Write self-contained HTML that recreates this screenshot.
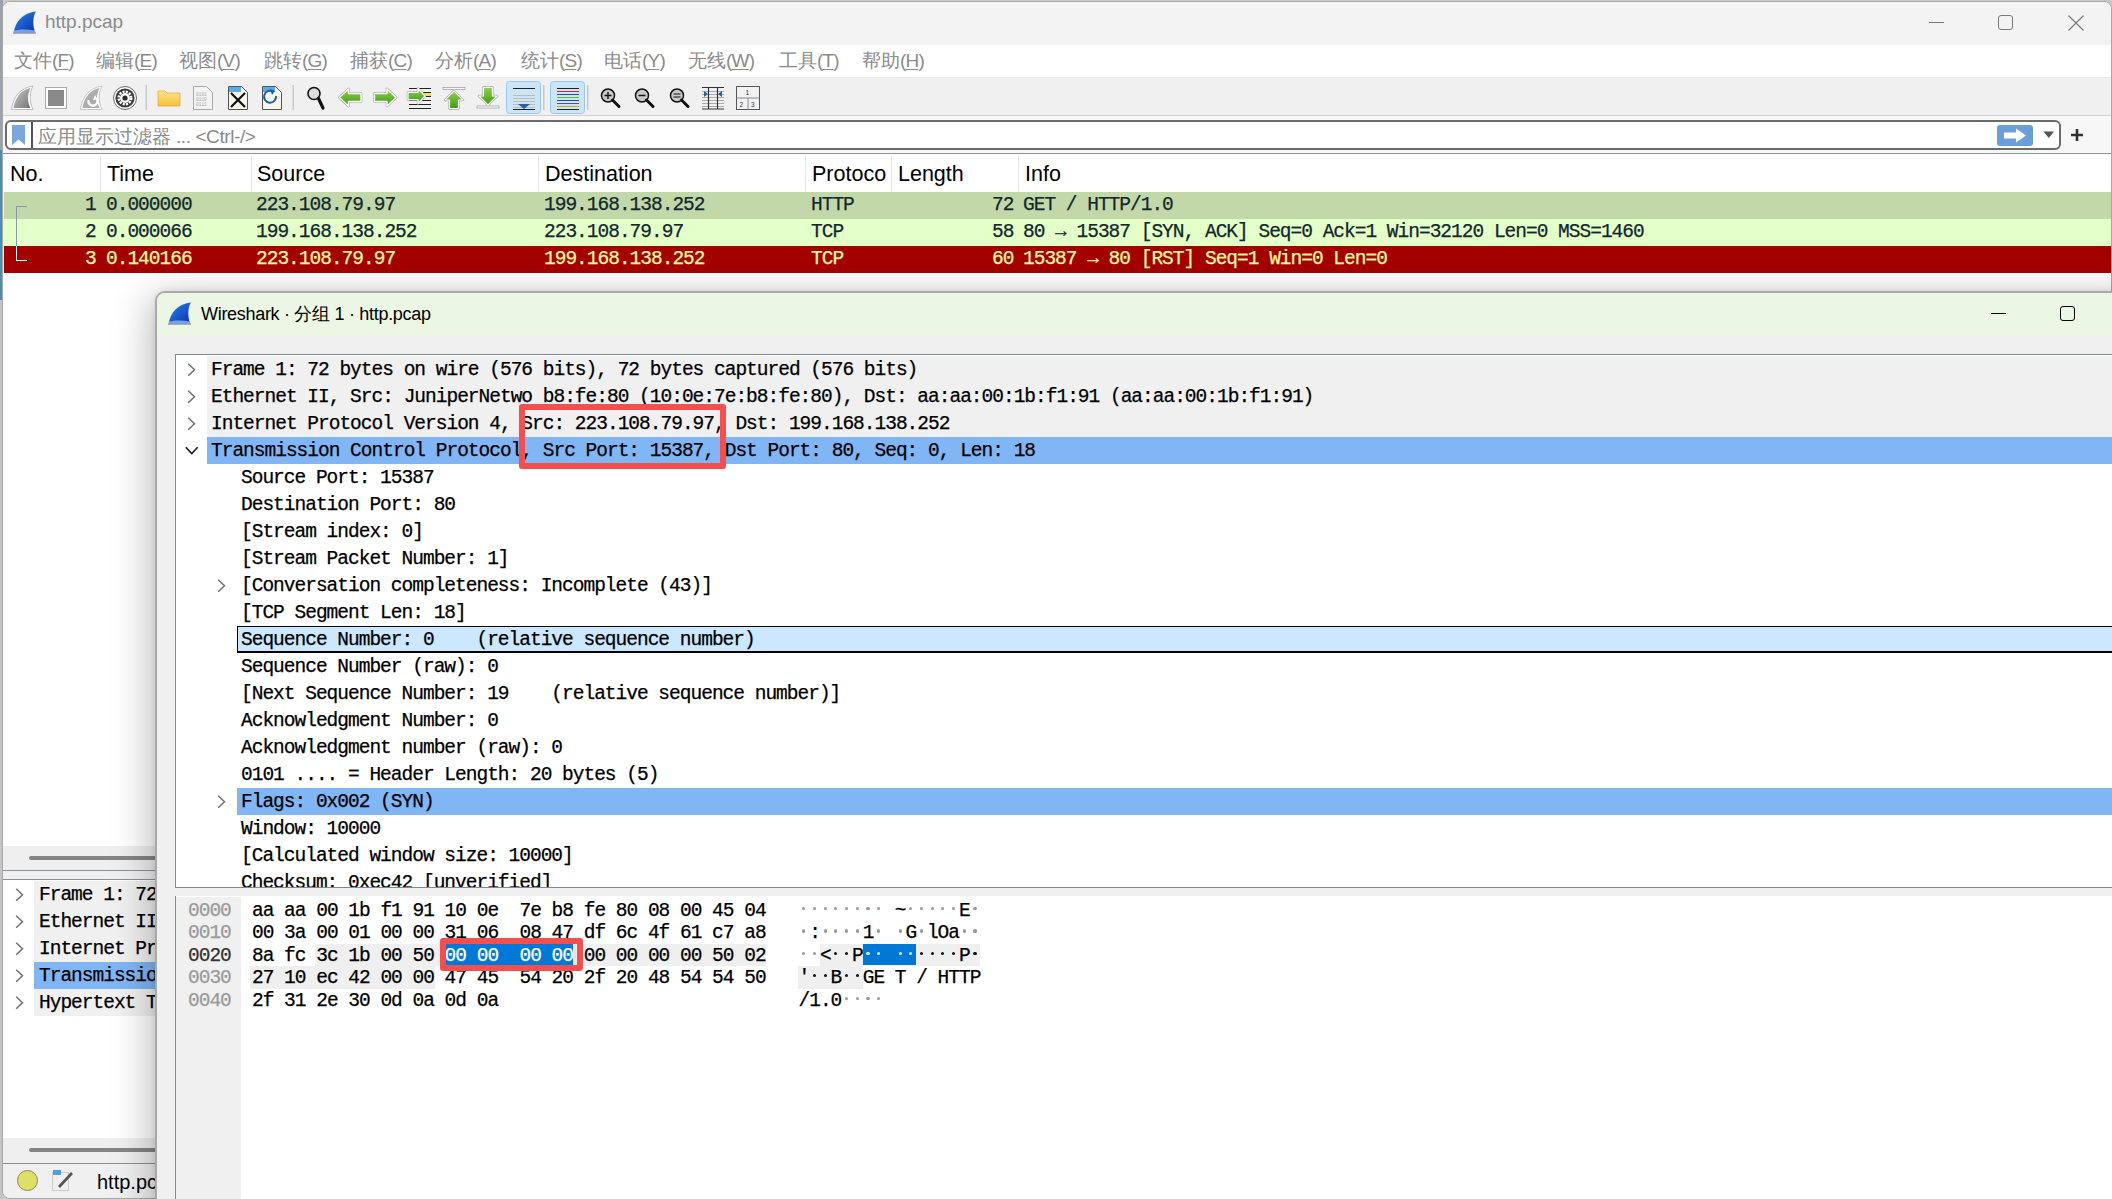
<!DOCTYPE html><html><head><meta charset="utf-8"><style>
*{margin:0;padding:0;box-sizing:border-box}
html,body{width:2112px;height:1199px;overflow:hidden;background:#c9c9c9;font-family:"Liberation Sans", sans-serif}
.a{position:absolute}
.m{font-family:"Liberation Mono", monospace;font-size:19.5px;letter-spacing:-1.0px;white-space:pre;line-height:27px;color:#000;-webkit-text-stroke:0.25px currentColor}
.s{font-family:"Liberation Sans", sans-serif;white-space:pre}
.mn{font-family:"Liberation Sans", sans-serif;font-size:19px;color:#8a8a8a;line-height:32px;white-space:pre}
.u{text-decoration:underline;text-underline-offset:2px}
.hd{font-family:"Liberation Sans", sans-serif;font-size:21.5px;line-height:38px;color:#000;white-space:pre}
</style></head><body>
<div class="a" style="left:0px;top:0px;width:3px;height:150px;background:#9aa3ab;"></div>
<div class="a" style="left:0px;top:150px;width:3px;height:150px;background:#4a8db5;"></div>
<div class="a" style="left:0px;top:300px;width:3px;height:899px;background:#c4c4c4;"></div>
<div class="a" style="left:2px;top:1px;width:2110px;height:1198px;border:1px solid #a8a8a8;border-radius:8px;background:#f0f0f0;overflow:hidden"><div class="a" style="left:-3px;top:-2px;width:2112px;height:1199px">
<div class="a" style="left:0px;top:0px;width:2112px;height:45px;background:#f3f3f3;"></div>
<svg class="a" style="left:13px;top:11px" width="24" height="23" viewBox="0 0 24 23">
<defs><linearGradient id="sg1" x1="0" y1="0" x2="1" y2="1"><stop offset="0" stop-color="#2a86f0"/><stop offset="1" stop-color="#0a2fa8"/></linearGradient></defs>
<path d="M0.5 22 C2 11 9 2 23.2 0.2 C20 5 19.5 14 22.5 22 Z" fill="url(#sg1)" stroke="#ffffff" stroke-opacity="0.5" stroke-width="0.6"/>
<path d="M1 19.5 C7 18 15 18 22 19.5 L22.5 22 L0.5 22 Z" fill="#8ab0f0" opacity="0.85"/>
<path d="M0 22.3 H23" stroke="#6a6a70" stroke-width="0.9" opacity="0.7"/>
</svg>
<div class="a s" style="left:45px;top:8px;font-size:19px;color:#8b8b8b;line-height:27px">http.pcap</div>
<div class="a" style="left:1929px;top:22px;width:15px;height:1px;background:#7a7a7a;"></div>
<div class="a" style="left:1998px;top:15px;width:15px;height:15px;background:transparent;border:1px solid #7a7a7a;border-radius:3px"></div>
<svg class="a" style="left:2068px;top:15px" width="16" height="16"><path d="M0.5 0.5L15.5 15.5M15.5 0.5L0.5 15.5" stroke="#7a7a7a" stroke-width="1.1"/></svg>
<div class="a" style="left:0px;top:45px;width:2112px;height:32px;background:#ffffff;"></div>
<div class="a mn" style="left:14px;top:45px">文件<span style="letter-spacing:-0.8px">(<span class="u">F</span>)</span></div>
<div class="a mn" style="left:96px;top:45px">编辑<span style="letter-spacing:-0.8px">(<span class="u">E</span>)</span></div>
<div class="a mn" style="left:179px;top:45px">视图<span style="letter-spacing:-0.8px">(<span class="u">V</span>)</span></div>
<div class="a mn" style="left:264px;top:45px">跳转<span style="letter-spacing:-0.8px">(<span class="u">G</span>)</span></div>
<div class="a mn" style="left:350px;top:45px">捕获<span style="letter-spacing:-0.8px">(<span class="u">C</span>)</span></div>
<div class="a mn" style="left:435px;top:45px">分析<span style="letter-spacing:-0.8px">(<span class="u">A</span>)</span></div>
<div class="a mn" style="left:521px;top:45px">统计<span style="letter-spacing:-0.8px">(<span class="u">S</span>)</span></div>
<div class="a mn" style="left:604px;top:45px">电话<span style="letter-spacing:-0.8px">(<span class="u">Y</span>)</span></div>
<div class="a mn" style="left:688px;top:45px">无线<span style="letter-spacing:-0.8px">(<span class="u">W</span>)</span></div>
<div class="a mn" style="left:779px;top:45px">工具<span style="letter-spacing:-0.8px">(<span class="u">T</span>)</span></div>
<div class="a mn" style="left:862px;top:45px">帮助<span style="letter-spacing:-0.8px">(<span class="u">H</span>)</span></div>
<div class="a" style="left:0px;top:77px;width:2112px;height:1px;background:#e9e9e9;"></div>
<div class="a" style="left:0px;top:78px;width:2112px;height:37px;background:#f0f0f0;"></div>
<div class="a" style="left:0px;top:115px;width:2112px;height:1px;background:#d0d0d0;"></div>
<svg class="a" style="left:0;top:78px" width="800" height="37" viewBox="0 78 800 37">
<defs>
<linearGradient id="gf" x1="0" y1="0" x2="1" y2="1"><stop offset="0" stop-color="#c8c8c8"/><stop offset="1" stop-color="#777"/></linearGradient>
<linearGradient id="gg" x1="0" y1="0" x2="0" y2="1"><stop offset="0" stop-color="#8fd14f"/><stop offset="1" stop-color="#3f9a10"/></linearGradient>
<linearGradient id="fo" x1="0" y1="0" x2="0" y2="1"><stop offset="0" stop-color="#ffe48a"/><stop offset="1" stop-color="#f5c040"/></linearGradient>
</defs>
<!-- shark fin gray -->
<path d="M11.5 109.5 C13 97 20 88 33 86 C29.5 92 29 101 33 109.5 Z" fill="#fff" stroke="#bdbdbd" stroke-width="1"/>
<path d="M13.5 108 C15 98 21 90 30.5 88 C27.5 94 27 101 30.5 108 Z" fill="url(#gf)"/>
<!-- stop square -->
<rect x="45.5" y="87.5" width="21" height="21" fill="#fff" stroke="#aaa"/>
<rect x="48" y="90" width="16" height="16" fill="#8a8a8a"/>
<!-- shark restart -->
<path d="M80.5 109.5 C82 97 89 88 102 86 C98.5 92 98 101 102 109.5 Z" fill="#fff" stroke="#c4c4c4" stroke-width="1"/>
<path d="M82.5 108 C84 98 90 90 99.5 88 C96.5 94 96 101 99.5 108 Z" fill="#acacac"/>
<path d="M88.5 100 a4.5 4.5 0 1 0 8 -1.5" fill="none" stroke="#fff" stroke-width="2.2"/>
<path d="M95 95 l3 4.5 -5 0.5z" fill="#fff"/>
<!-- gear -->
<circle cx="125" cy="98" r="11.5" fill="#fff" stroke="#666" stroke-width="1"/>
<circle cx="125" cy="98" r="9.6" fill="#3a3a3a"/>
<circle cx="125" cy="98" r="6.3" fill="none" stroke="#fff" stroke-width="2.4" stroke-dasharray="2.1 1.2"/>
<circle cx="125" cy="98" r="5" fill="#fff"/>
<circle cx="125" cy="98" r="2.6" fill="#2a2a2a"/>
<rect x="145.5" y="85" width="1.5" height="25" fill="#c8c8c8"/>
<!-- folder -->
<path d="M158 91 h7 l2 2 h13 v13 h-22z" fill="url(#fo)" stroke="#e5a823" stroke-width="0.7"/>
<!-- docs -->
<path d="M193.5 86.5 h13 l6 6 v17 h-19z" fill="#f3f3f3" stroke="#aaa"/>
<text x="196" y="96" font-size="4.5" fill="#aaa" font-family="Liberation Mono">0101</text><text x="196" y="101" font-size="4.5" fill="#aaa" font-family="Liberation Mono">0110</text><text x="196" y="106" font-size="4.5" fill="#aaa" font-family="Liberation Mono">0111</text>
<path d="M228.5 86.5 h13 l6 6 v17 h-19z" fill="#f8f6e8" stroke="#555"/>
<path d="M229 87 h12 v5 h-12z" fill="#5aaae8"/>
<path d="M231 93 L245 107 M245 93 L231 107" stroke="#111" stroke-width="2.2"/>
<path d="M262.5 86.5 h13 l6 6 v17 h-19z" fill="#f8f6e8" stroke="#555"/>
<path d="M263 87 h12 v5 h-12z" fill="#5aaae8"/>
<path d="M276 96 a6 6 0 1 1 -3 -4.5" fill="none" stroke="#1d5bb8" stroke-width="2"/>
<path d="M270 89 l5 2 -3 4z" fill="#1d5bb8"/>
<rect x="292.5" y="85" width="1.5" height="25" fill="#c8c8c8"/>
<!-- magnifier -->
<circle cx="314" cy="93.5" r="6" fill="#ddd" stroke="#111" stroke-width="1.6"/>
<path d="M318.5 98.5 L323 108" stroke="#111" stroke-width="3.2" stroke-linecap="round"/>
<!-- left arrow -->
<path d="M339.5 97.5 L348.5 89 V93.5 H361 V101.5 H348.5 V106Z" fill="#fff" stroke="#a8a8a8" stroke-width="2.6" stroke-linejoin="round"/>
<path d="M339.5 97.5 L348.5 89 V93.5 H361 V101.5 H348.5 V106Z" fill="url(#gg)" stroke="#fff" stroke-width="1.4" stroke-linejoin="round"/>
<!-- right arrow -->
<path d="M396 97.5 L387 89 V93.5 H374.5 V101.5 H387 V106Z" fill="#fff" stroke="#a8a8a8" stroke-width="2.6" stroke-linejoin="round"/>
<path d="M396 97.5 L387 89 V93.5 H374.5 V101.5 H387 V106Z" fill="url(#gg)" stroke="#fff" stroke-width="1.4" stroke-linejoin="round"/>
<!-- goto -->
<g stroke="#222" stroke-width="1.2"><path d="M409 88.5H431M409 92.5H431M409 96.5H431M409 100.5H431M409 104.5H431M409 108.5H431"/></g>
<rect x="424" y="93" width="7" height="3" fill="#f7e04a"/>
<path d="M425 96 L418 88.5 V92.5 H408 V99.5 H418 V103.5Z" fill="#fff" stroke="#a8a8a8" stroke-width="2.4" stroke-linejoin="round"/>
<path d="M425 96 L418 88.5 V92.5 H408 V99.5 H418 V103.5Z" fill="url(#gg)" stroke="#fff" stroke-width="1.2" stroke-linejoin="round"/>
<!-- up -->
<rect x="443" y="87.5" width="22" height="2" fill="#fff" stroke="#888" stroke-width="0.6"/>
<path d="M454 91 L463 100 H458.5 V108.5 H449.5 V100 H445Z" fill="#fff" stroke="#a8a8a8" stroke-width="2.4" stroke-linejoin="round"/>
<path d="M454 91 L463 100 H458.5 V108.5 H449.5 V100 H445Z" fill="url(#gg)" stroke="#fff" stroke-width="1.2" stroke-linejoin="round"/>
<!-- down -->
<rect x="477" y="106" width="22" height="2" fill="#fff" stroke="#888" stroke-width="0.6"/>
<path d="M488 105 L497 96 H492.5 V87.5 H483.5 V96 H479Z" fill="#fff" stroke="#a8a8a8" stroke-width="2.4" stroke-linejoin="round"/>
<path d="M488 105 L497 96 H492.5 V87.5 H483.5 V96 H479Z" fill="url(#gg)" stroke="#fff" stroke-width="1.2" stroke-linejoin="round"/>
<!-- autoscroll -->
<rect x="506.5" y="81.5" width="34" height="32" rx="3" fill="#cce4f7" stroke="#99c8ef"/>
<g stroke="#bdbdb0" stroke-width="1.2"><path d="M513 95.5H535M513 98.5H535M513 101.5H535M513 104.5H535M513 107.5H535"/></g>
<path d="M513 88.5H535M513 109.5H535" stroke="#222" stroke-width="1.2"/>
<path d="M518 104 h12 l-6 5z" fill="#2a5fa8"/>
<rect x="543" y="85" width="1.5" height="25" fill="#c8c8c8"/>
<!-- colorize -->
<rect x="550.5" y="81.5" width="34" height="32" rx="3" fill="#cce4f7" stroke="#99c8ef"/>
<path d="M557 88.5H579" stroke="#222" stroke-width="1.2"/><path d="M557 91.5H579" stroke="#e02020" stroke-width="1.2"/><path d="M557 94.5H579" stroke="#2050c0" stroke-width="1.2"/><path d="M557 97.5H579" stroke="#60c020" stroke-width="1.2"/><path d="M557 100.5H579" stroke="#2050a0" stroke-width="1.2"/><path d="M557 103.5H579" stroke="#704090" stroke-width="1.2"/><path d="M557 106.5H579" stroke="#d0a020" stroke-width="1.2"/><path d="M557 109.5H579" stroke="#222" stroke-width="1.2"/>
<rect x="587" y="85" width="1.5" height="25" fill="#c8c8c8"/>
<!-- zoom in/out/normal -->
<g>
<circle cx="608" cy="95.5" r="6.5" fill="#c8c8c8" stroke="#111" stroke-width="1.5"/><path d="M612.5 100 L619 106.5" stroke="#111" stroke-width="3" stroke-linecap="round"/><path d="M604.5 95.5h7M608 92v7" stroke="#111" stroke-width="1.4"/>
<circle cx="642" cy="95.5" r="6.5" fill="#c8c8c8" stroke="#111" stroke-width="1.5"/><path d="M646.5 100 L653 106.5" stroke="#111" stroke-width="3" stroke-linecap="round"/><path d="M638.5 95.5h7" stroke="#111" stroke-width="1.4"/>
<circle cx="677" cy="95.5" r="6.5" fill="#c8c8c8" stroke="#111" stroke-width="1.5"/><path d="M681.5 100 L688 106.5" stroke="#111" stroke-width="3" stroke-linecap="round"/><path d="M673.5 94h7M673.5 97h7" stroke="#111" stroke-width="1.2"/>
</g>
<!-- resize columns -->
<g stroke="#999" stroke-width="0.8"><path d="M702 91.5H724M702 94.5H724M702 97.5H724M702 100.5H724M702 103.5H724M702 106.5H724"/></g>
<path d="M702 87.5H724M702 109H724M708.5 87V109M717.5 87V109" stroke="#333" stroke-width="1.2"/>
<path d="M704 91 l4 3 -4 3z M722 91 l-4 3 4 3z" fill="#2a5fa8"/>
<!-- layout -->
<rect x="736.5" y="86.5" width="23" height="23" fill="#f2f2f2" stroke="#555"/>
<path d="M736.5 98H759.5M748 98V109.5" stroke="#888"/>
<text x="745.5" y="95" font-size="6.5" font-family="Liberation Sans" fill="#333">1</text>
<text x="739.5" y="106.5" font-size="6.5" font-family="Liberation Sans" fill="#333">2</text>
<text x="751" y="106.5" font-size="6.5" font-family="Liberation Sans" fill="#333">3</text>
</svg>
<div class="a" style="left:0px;top:116px;width:2112px;height:37px;background:#f7f7f7;"></div>
<div class="a" style="left:5px;top:120px;width:2056px;height:30px;background:#ffffff;border:2px solid #6b6b6b;border-radius:6px"></div>
<div class="a" style="left:31px;top:122px;width:2px;height:26px;background:#555;"></div>
<div class="a" style="left:12px;top:125px;width:13px;height:20px;background:#7aa7de;clip-path:polygon(0 0,100% 0,100% 100%,50% 72%,0 100%)"></div>
<div class="a s" style="left:38px;top:122px;font-size:19px;line-height:30px;color:#8a8a8a">应用显示过滤器<span style="letter-spacing:-0.4px"> ... &lt;Ctrl-/&gt;</span></div>
<div class="a" style="left:1997px;top:125px;width:36px;height:21px;background:#6b9fd8;border-radius:3px"></div>
<svg class="a" style="left:1997px;top:125px" width="36" height="21"><path d="M7 7.5H19V3.5L29 10.5L19 17.5V13.5H7Z" fill="#fff"/></svg>
<svg class="a" style="left:2043px;top:131px" width="12" height="8"><path d="M0.5 0.5H11L5.75 7Z" fill="#555"/></svg>
<svg class="a" style="left:2070px;top:128px" width="14" height="14"><path d="M7 1V13M1 7H13" stroke="#333" stroke-width="2.6"/></svg>
<div class="a" style="left:2px;top:153px;width:2112px;height:1px;background:#8c9097;"></div>
<div class="a" style="left:3px;top:154px;width:2112px;height:38px;background:#ffffff;"></div>
<div class="a" style="left:100px;top:156px;width:1px;height:36px;background:#e5e5e5;"></div>
<div class="a" style="left:251px;top:156px;width:1px;height:36px;background:#e5e5e5;"></div>
<div class="a" style="left:538px;top:156px;width:1px;height:36px;background:#e5e5e5;"></div>
<div class="a" style="left:805px;top:156px;width:1px;height:36px;background:#e5e5e5;"></div>
<div class="a" style="left:891px;top:156px;width:1px;height:36px;background:#e5e5e5;"></div>
<div class="a" style="left:1018px;top:156px;width:1px;height:36px;background:#e5e5e5;"></div>
<div class="a hd" style="left:10px;top:155px;">No.</div>
<div class="a hd" style="left:107px;top:155px;">Time</div>
<div class="a hd" style="left:257px;top:155px;">Source</div>
<div class="a hd" style="left:545px;top:155px;">Destination</div>
<div class="a hd" style="left:812px;top:155px;">Protoco</div>
<div class="a hd" style="left:898px;top:155px;">Length</div>
<div class="a hd" style="left:1025px;top:155px;">Info</div>
<div class="a" style="left:4px;top:192px;width:2112px;height:27px;background:#c2d8a8;"></div>
<div class="a m" style="left:85px;top:192.4px;color:#12272e">1</div>
<div class="a m" style="left:106px;top:192.4px;color:#12272e">0.000000</div>
<div class="a m" style="left:256px;top:192.4px;color:#12272e">223.108.79.97</div>
<div class="a m" style="left:544px;top:192.4px;color:#12272e">199.168.138.252</div>
<div class="a m" style="left:811px;top:192.4px;color:#12272e">HTTP</div>
<div class="a m" style="left:992px;top:192.4px;color:#12272e">72</div>
<div class="a m" style="left:1023px;top:192.4px;color:#12272e">GET / HTTP/1.0</div>
<div class="a" style="left:4px;top:219px;width:2112px;height:27px;background:#e4ffc7;"></div>
<div class="a m" style="left:85px;top:219.4px;color:#12272e">2</div>
<div class="a m" style="left:106px;top:219.4px;color:#12272e">0.000066</div>
<div class="a m" style="left:256px;top:219.4px;color:#12272e">199.168.138.252</div>
<div class="a m" style="left:544px;top:219.4px;color:#12272e">223.108.79.97</div>
<div class="a m" style="left:811px;top:219.4px;color:#12272e">TCP</div>
<div class="a m" style="left:992px;top:219.4px;color:#12272e">58</div>
<div class="a m" style="left:1023px;top:219.4px;color:#12272e">80 → 15387 [SYN, ACK] Seq=0 Ack=1 Win=32120 Len=0 MSS=1460</div>
<div class="a" style="left:4px;top:246px;width:2112px;height:27px;background:#a40000;"></div>
<div class="a m" style="left:85px;top:246.4px;color:#fffc9c">3</div>
<div class="a m" style="left:106px;top:246.4px;color:#fffc9c">0.140166</div>
<div class="a m" style="left:256px;top:246.4px;color:#fffc9c">223.108.79.97</div>
<div class="a m" style="left:544px;top:246.4px;color:#fffc9c">199.168.138.252</div>
<div class="a m" style="left:811px;top:246.4px;color:#fffc9c">TCP</div>
<div class="a m" style="left:992px;top:246.4px;color:#fffc9c">60</div>
<div class="a m" style="left:1023px;top:246.4px;color:#fffc9c">15387 → 80 [RST] Seq=1 Win=0 Len=0</div>
<div class="a" style="left:16px;top:206px;width:1.2px;height:40px;background:#8a99a6;"></div>
<div class="a" style="left:16px;top:206px;width:11px;height:1.2px;background:#8a99a6;"></div>
<div class="a" style="left:16px;top:259.5px;width:11px;height:1.4px;background:#ffffff;"></div>
<div class="a" style="left:16px;top:246px;width:1.4px;height:14px;background:#ffffff;"></div>
<div class="a" style="left:3px;top:273px;width:2112px;height:573px;background:#ffffff;"></div>
<div class="a" style="left:3px;top:846px;width:2112px;height:24px;background:#efefef;"></div>
<div class="a" style="left:29px;top:856px;width:2100px;height:4px;background:#858585;border-radius:2px"></div>
<div class="a" style="left:2px;top:870px;width:2112px;height:1px;background:#8c9097;"></div>
<div class="a" style="left:3px;top:871px;width:2112px;height:8px;background:#f0f0f0;"></div>
<div class="a" style="left:2px;top:879px;width:2112px;height:1px;background:#8c9097;"></div>
<div class="a" style="left:3px;top:880px;width:2112px;height:258px;background:#ffffff;"></div>
<div class="a" style="left:34px;top:881px;width:2112px;height:27px;background:#f0f0f0;"></div>
<div class="a m" style="left:39px;top:882px;">Frame 1: 72 bytes on wire (576 bits), 72 bytes captured (576 bits)</div>
<svg class="a" style="left:15px;top:888px" width="10" height="14"><path d="M1.2 0.8L7.5 6.8L1.2 12.8" fill="none" stroke="#707070" stroke-width="1.5"/></svg>
<div class="a" style="left:34px;top:908px;width:2112px;height:27px;background:#f0f0f0;"></div>
<div class="a m" style="left:39px;top:909px;">Ethernet II, Src: JuniperNetwo b8:fe:80</div>
<svg class="a" style="left:15px;top:915px" width="10" height="14"><path d="M1.2 0.8L7.5 6.8L1.2 12.8" fill="none" stroke="#707070" stroke-width="1.5"/></svg>
<div class="a" style="left:34px;top:935px;width:2112px;height:27px;background:#f0f0f0;"></div>
<div class="a m" style="left:39px;top:936px;">Internet Protocol Version 4, Src: 223.108.79.97</div>
<svg class="a" style="left:15px;top:942px" width="10" height="14"><path d="M1.2 0.8L7.5 6.8L1.2 12.8" fill="none" stroke="#707070" stroke-width="1.5"/></svg>
<div class="a" style="left:34px;top:962px;width:2112px;height:27px;background:#80b6f5;"></div>
<div class="a m" style="left:39px;top:963px;">Transmission Control Protocol, Src Port</div>
<svg class="a" style="left:15px;top:969px" width="10" height="14"><path d="M1.2 0.8L7.5 6.8L1.2 12.8" fill="none" stroke="#707070" stroke-width="1.5"/></svg>
<div class="a" style="left:34px;top:989px;width:2112px;height:27px;background:#f0f0f0;"></div>
<div class="a m" style="left:39px;top:990px;">Hypertext Transfer Protocol</div>
<svg class="a" style="left:15px;top:996px" width="10" height="14"><path d="M1.2 0.8L7.5 6.8L1.2 12.8" fill="none" stroke="#707070" stroke-width="1.5"/></svg>
<div class="a" style="left:3px;top:1138px;width:2112px;height:25px;background:#efefef;"></div>
<div class="a" style="left:29px;top:1148px;width:2100px;height:4px;background:#858585;border-radius:2px"></div>
<div class="a" style="left:2px;top:1163px;width:2112px;height:1px;background:#8c9097;"></div>
<div class="a" style="left:3px;top:1164px;width:2112px;height:35px;background:#f0f0f0;"></div>
<svg class="a" style="left:16px;top:1169px" width="23" height="23"><circle cx="11.5" cy="11.5" r="10" fill="#dede6a" stroke="#8c8c40" stroke-width="1"/></svg>
<svg class="a" style="left:52px;top:1169px" width="22" height="22"><rect x="0.5" y="3.5" width="16" height="18" fill="#f0f0f0" stroke="#ccc"/><rect x="1" y="1" width="8" height="5" fill="#4aa0e0"/><path d="M6 17 L19 3 L21 5 L8 19Z" fill="#555"/></svg>
<div class="a s" style="left:97px;top:1165.5px;font-size:20px;line-height:33px;color:#000">http.pcap</div>
</div></div>
<div class="a" style="left:155px;top:291px;width:2000px;height:1000px;border:2px solid #a9a9a9;border-radius:10px;background:#f0f0f0;box-shadow:-4px 6px 38px rgba(0,0,0,0.28), 0 0 6px rgba(0,0,0,0.08);overflow:hidden"><div class="a" style="left:-157px;top:-293px;width:2112px;height:1199px">
<div class="a" style="left:0px;top:293px;width:2112px;height:43px;background:#ebf6e4;"></div>
<svg class="a" style="left:168px;top:302px" width="24" height="23" viewBox="0 0 24 23">
<defs><linearGradient id="sg2" x1="0" y1="0" x2="1" y2="1"><stop offset="0" stop-color="#2a86f0"/><stop offset="1" stop-color="#0a2fa8"/></linearGradient></defs>
<path d="M0.5 22 C2 11 9 2 23.2 0.2 C20 5 19.5 14 22.5 22 Z" fill="url(#sg2)" stroke="#ffffff" stroke-opacity="0.5" stroke-width="0.6"/>
<path d="M1 19.5 C7 18 15 18 22 19.5 L22.5 22 L0.5 22 Z" fill="#8ab0f0" opacity="0.85"/>
<path d="M0 22.3 H23" stroke="#6a6a70" stroke-width="0.9" opacity="0.7"/>
</svg>
<div class="a s" style="left:201px;top:301px;font-size:18px;letter-spacing:-0.3px;line-height:27px;color:#000">Wireshark · 分组 1 · http.pcap</div>
<div class="a" style="left:1991px;top:313px;width:15px;height:1.2px;background:#000;"></div>
<div class="a" style="left:2060px;top:306px;width:15px;height:15px;background:transparent;border:1.5px solid #000;border-radius:3px"></div>
<div class="a" style="left:175px;top:354px;width:2000px;height:534px;background:#ffffff;border:1px solid #828790"></div>
<div class="a" style="left:176px;top:355px;width:1936px;height:532px;overflow:hidden"><div class="a" style="left:-176px;top:-355px;width:2112px;height:1199px">
<div class="a" style="left:207px;top:356px;width:2112px;height:27px;background:#f0f0f0;"></div>
<div class="a m" style="left:211px;top:357px;">Frame 1: 72 bytes on wire (576 bits), 72 bytes captured (576 bits)</div>
<svg class="a" style="left:187px;top:363px" width="10" height="14"><path d="M1.2 0.8L7.5 6.8L1.2 12.8" fill="none" stroke="#707070" stroke-width="1.5"/></svg>
<div class="a" style="left:207px;top:383px;width:2112px;height:27px;background:#f0f0f0;"></div>
<div class="a m" style="left:211px;top:384px;">Ethernet II, Src: JuniperNetwo b8:fe:80 (10:0e:7e:b8:fe:80), Dst: aa:aa:00:1b:f1:91 (aa:aa:00:1b:f1:91)</div>
<svg class="a" style="left:187px;top:390px" width="10" height="14"><path d="M1.2 0.8L7.5 6.8L1.2 12.8" fill="none" stroke="#707070" stroke-width="1.5"/></svg>
<div class="a" style="left:207px;top:410px;width:2112px;height:27px;background:#f0f0f0;"></div>
<div class="a m" style="left:211px;top:411px;">Internet Protocol Version 4, Src: 223.108.79.97, Dst: 199.168.138.252</div>
<svg class="a" style="left:187px;top:417px" width="10" height="14"><path d="M1.2 0.8L7.5 6.8L1.2 12.8" fill="none" stroke="#707070" stroke-width="1.5"/></svg>
<div class="a" style="left:207px;top:437px;width:2112px;height:27px;background:#80b6f5;"></div>
<div class="a m" style="left:211px;top:438px;">Transmission Control Protocol, Src Port: 15387, Dst Port: 80, Seq: 0, Len: 18</div>
<svg class="a" style="left:185px;top:446px" width="14" height="9"><path d="M0.8 1.2L6.75 7.5L12.7 1.2" fill="none" stroke="#1a1a1a" stroke-width="1.6"/></svg>
<div class="a m" style="left:241px;top:465px;">Source Port: 15387</div>
<div class="a m" style="left:241px;top:492px;">Destination Port: 80</div>
<div class="a m" style="left:241px;top:519px;">[Stream index: 0]</div>
<div class="a m" style="left:241px;top:546px;">[Stream Packet Number: 1]</div>
<div class="a m" style="left:241px;top:573px;">[Conversation completeness: Incomplete (43)]</div>
<svg class="a" style="left:217px;top:579px" width="10" height="14"><path d="M1.2 0.8L7.5 6.8L1.2 12.8" fill="none" stroke="#707070" stroke-width="1.5"/></svg>
<div class="a m" style="left:241px;top:600px;">[TCP Segment Len: 18]</div>
<div class="a" style="left:237px;top:626px;width:2112px;height:27px;background:#cce8ff;border:1px solid #000;border-bottom-width:2px"></div>
<div class="a m" style="left:241px;top:627px;">Sequence Number: 0    (relative sequence number)</div>
<div class="a m" style="left:241px;top:654px;">Sequence Number (raw): 0</div>
<div class="a m" style="left:241px;top:681px;">[Next Sequence Number: 19    (relative sequence number)]</div>
<div class="a m" style="left:241px;top:708px;">Acknowledgment Number: 0</div>
<div class="a m" style="left:241px;top:735px;">Acknowledgment number (raw): 0</div>
<div class="a m" style="left:241px;top:762px;">0101 .... = Header Length: 20 bytes (5)</div>
<div class="a" style="left:237px;top:788px;width:2112px;height:27px;background:#80b6f5;"></div>
<div class="a m" style="left:241px;top:789px;">Flags: 0x002 (SYN)</div>
<svg class="a" style="left:217px;top:795px" width="10" height="14"><path d="M1.2 0.8L7.5 6.8L1.2 12.8" fill="none" stroke="#707070" stroke-width="1.5"/></svg>
<div class="a m" style="left:241px;top:816px;">Window: 10000</div>
<div class="a m" style="left:241px;top:843px;">[Calculated window size: 10000]</div>
<div class="a m" style="left:241px;top:870px;">Checksum: 0xec42 [unverified]</div>
</div></div>
<div class="a" style="left:175px;top:896px;width:2000px;height:400px;background:#ffffff;border-left:1px solid #828790"></div>
<div class="a" style="left:176px;top:897px;width:65px;height:400px;background:#f0f0f0;"></div>
<div class="a m" style="left:188px;top:900.0px;line-height:22.4px;color:#9a9a9a">0000</div>
<div class="a m" style="left:188px;top:922.4px;line-height:22.4px;color:#9a9a9a">0010</div>
<div class="a m" style="left:188px;top:944.8px;line-height:22.4px;color:#333">0020</div>
<div class="a m" style="left:188px;top:967.2px;line-height:22.4px;color:#9a9a9a">0030</div>
<div class="a m" style="left:188px;top:989.6px;line-height:22.4px;color:#9a9a9a">0040</div>
<div class="a" style="left:315.2px;top:943.8px;width:450.8px;height:22.4px;background:#efefef;"></div>
<div class="a" style="left:250px;top:966.2px;width:184.89999999999998px;height:22.4px;background:#efefef;"></div>
<div class="a" style="left:444.6px;top:943.5px;width:128.39999999999998px;height:21.5px;background:#0078d7;"></div>
<div class="a" style="left:573px;top:943.5px;width:3px;height:21.5px;background:#e6e6e6;"></div>
<div class="a" style="left:819.9px;top:943.8px;width:160.5000000000001px;height:22.4px;background:#efefef;"></div>
<div class="a" style="left:798px;top:966.2px;width:64.70000000000005px;height:22.4px;background:#efefef;"></div>
<div class="a" style="left:862.7px;top:943.5px;width:53.5px;height:21.5px;background:#0078d7;"></div>
<div class="a m" style="left:252.0px;top:900.0px;line-height:22.4px;color:#000">aa</div>
<div class="a m" style="left:284.1px;top:900.0px;line-height:22.4px;color:#000">aa</div>
<div class="a m" style="left:316.2px;top:900.0px;line-height:22.4px;color:#000">00</div>
<div class="a m" style="left:348.3px;top:900.0px;line-height:22.4px;color:#000">1b</div>
<div class="a m" style="left:380.4px;top:900.0px;line-height:22.4px;color:#000">f1</div>
<div class="a m" style="left:412.5px;top:900.0px;line-height:22.4px;color:#000">91</div>
<div class="a m" style="left:444.6px;top:900.0px;line-height:22.4px;color:#000">10</div>
<div class="a m" style="left:476.7px;top:900.0px;line-height:22.4px;color:#000">0e</div>
<div class="a m" style="left:519.5px;top:900.0px;line-height:22.4px;color:#000">7e</div>
<div class="a m" style="left:551.6px;top:900.0px;line-height:22.4px;color:#000">b8</div>
<div class="a m" style="left:583.7px;top:900.0px;line-height:22.4px;color:#000">fe</div>
<div class="a m" style="left:615.8px;top:900.0px;line-height:22.4px;color:#000">80</div>
<div class="a m" style="left:647.9px;top:900.0px;line-height:22.4px;color:#000">08</div>
<div class="a m" style="left:680.0px;top:900.0px;line-height:22.4px;color:#000">00</div>
<div class="a m" style="left:712.1px;top:900.0px;line-height:22.4px;color:#000">45</div>
<div class="a m" style="left:744.2px;top:900.0px;line-height:22.4px;color:#000">04</div>
<div class="a" style="left:802.20px;top:907.00px;width:3.2px;height:3.2px;border-radius:50%;background:#9a9a9a"></div>
<div class="a" style="left:812.90px;top:907.00px;width:3.2px;height:3.2px;border-radius:50%;background:#9a9a9a"></div>
<div class="a" style="left:823.60px;top:907.00px;width:3.2px;height:3.2px;border-radius:50%;background:#9a9a9a"></div>
<div class="a" style="left:834.30px;top:907.00px;width:3.2px;height:3.2px;border-radius:50%;background:#9a9a9a"></div>
<div class="a" style="left:845.00px;top:907.00px;width:3.2px;height:3.2px;border-radius:50%;background:#9a9a9a"></div>
<div class="a" style="left:855.70px;top:907.00px;width:3.2px;height:3.2px;border-radius:50%;background:#9a9a9a"></div>
<div class="a" style="left:866.40px;top:907.00px;width:3.2px;height:3.2px;border-radius:50%;background:#9a9a9a"></div>
<div class="a" style="left:877.10px;top:907.00px;width:3.2px;height:3.2px;border-radius:50%;background:#9a9a9a"></div>
<div class="a m" style="left:894.8px;top:900.0px;line-height:22.4px;color:#000">~</div>
<div class="a" style="left:909.20px;top:907.00px;width:3.2px;height:3.2px;border-radius:50%;background:#9a9a9a"></div>
<div class="a" style="left:919.90px;top:907.00px;width:3.2px;height:3.2px;border-radius:50%;background:#9a9a9a"></div>
<div class="a" style="left:930.60px;top:907.00px;width:3.2px;height:3.2px;border-radius:50%;background:#9a9a9a"></div>
<div class="a" style="left:941.30px;top:907.00px;width:3.2px;height:3.2px;border-radius:50%;background:#9a9a9a"></div>
<div class="a" style="left:952.00px;top:907.00px;width:3.2px;height:3.2px;border-radius:50%;background:#9a9a9a"></div>
<div class="a m" style="left:959.0px;top:900.0px;line-height:22.4px;color:#000">E</div>
<div class="a" style="left:973.40px;top:907.00px;width:3.2px;height:3.2px;border-radius:50%;background:#9a9a9a"></div>
<div class="a m" style="left:252.0px;top:922.4px;line-height:22.4px;color:#000">00</div>
<div class="a m" style="left:284.1px;top:922.4px;line-height:22.4px;color:#000">3a</div>
<div class="a m" style="left:316.2px;top:922.4px;line-height:22.4px;color:#000">00</div>
<div class="a m" style="left:348.3px;top:922.4px;line-height:22.4px;color:#000">01</div>
<div class="a m" style="left:380.4px;top:922.4px;line-height:22.4px;color:#000">00</div>
<div class="a m" style="left:412.5px;top:922.4px;line-height:22.4px;color:#000">00</div>
<div class="a m" style="left:444.6px;top:922.4px;line-height:22.4px;color:#000">31</div>
<div class="a m" style="left:476.7px;top:922.4px;line-height:22.4px;color:#000">06</div>
<div class="a m" style="left:519.5px;top:922.4px;line-height:22.4px;color:#000">08</div>
<div class="a m" style="left:551.6px;top:922.4px;line-height:22.4px;color:#000">47</div>
<div class="a m" style="left:583.7px;top:922.4px;line-height:22.4px;color:#000">df</div>
<div class="a m" style="left:615.8px;top:922.4px;line-height:22.4px;color:#000">6c</div>
<div class="a m" style="left:647.9px;top:922.4px;line-height:22.4px;color:#000">4f</div>
<div class="a m" style="left:680.0px;top:922.4px;line-height:22.4px;color:#000">61</div>
<div class="a m" style="left:712.1px;top:922.4px;line-height:22.4px;color:#000">c7</div>
<div class="a m" style="left:744.2px;top:922.4px;line-height:22.4px;color:#000">a8</div>
<div class="a" style="left:802.20px;top:929.40px;width:3.2px;height:3.2px;border-radius:50%;background:#9a9a9a"></div>
<div class="a m" style="left:809.2px;top:922.4px;line-height:22.4px;color:#000">:</div>
<div class="a" style="left:823.60px;top:929.40px;width:3.2px;height:3.2px;border-radius:50%;background:#9a9a9a"></div>
<div class="a" style="left:834.30px;top:929.40px;width:3.2px;height:3.2px;border-radius:50%;background:#9a9a9a"></div>
<div class="a" style="left:845.00px;top:929.40px;width:3.2px;height:3.2px;border-radius:50%;background:#9a9a9a"></div>
<div class="a" style="left:855.70px;top:929.40px;width:3.2px;height:3.2px;border-radius:50%;background:#9a9a9a"></div>
<div class="a m" style="left:862.7px;top:922.4px;line-height:22.4px;color:#000">1</div>
<div class="a" style="left:877.10px;top:929.40px;width:3.2px;height:3.2px;border-radius:50%;background:#9a9a9a"></div>
<div class="a" style="left:898.50px;top:929.40px;width:3.2px;height:3.2px;border-radius:50%;background:#9a9a9a"></div>
<div class="a m" style="left:905.5px;top:922.4px;line-height:22.4px;color:#000">G</div>
<div class="a" style="left:919.90px;top:929.40px;width:3.2px;height:3.2px;border-radius:50%;background:#9a9a9a"></div>
<div class="a m" style="left:926.9px;top:922.4px;line-height:22.4px;color:#000">l</div>
<div class="a m" style="left:937.6px;top:922.4px;line-height:22.4px;color:#000">O</div>
<div class="a m" style="left:948.3px;top:922.4px;line-height:22.4px;color:#000">a</div>
<div class="a" style="left:962.70px;top:929.40px;width:3.2px;height:3.2px;border-radius:50%;background:#9a9a9a"></div>
<div class="a" style="left:973.40px;top:929.40px;width:3.2px;height:3.2px;border-radius:50%;background:#9a9a9a"></div>
<div class="a m" style="left:252.0px;top:944.8px;line-height:22.4px;color:#000">8a</div>
<div class="a m" style="left:284.1px;top:944.8px;line-height:22.4px;color:#000">fc</div>
<div class="a m" style="left:316.2px;top:944.8px;line-height:22.4px;color:#000">3c</div>
<div class="a m" style="left:348.3px;top:944.8px;line-height:22.4px;color:#000">1b</div>
<div class="a m" style="left:380.4px;top:944.8px;line-height:22.4px;color:#000">00</div>
<div class="a m" style="left:412.5px;top:944.8px;line-height:22.4px;color:#000">50</div>
<div class="a m" style="left:444.6px;top:944.8px;line-height:22.4px;color:#fff">00</div>
<div class="a m" style="left:476.7px;top:944.8px;line-height:22.4px;color:#fff">00</div>
<div class="a m" style="left:519.5px;top:944.8px;line-height:22.4px;color:#fff">00</div>
<div class="a m" style="left:551.6px;top:944.8px;line-height:22.4px;color:#fff">00</div>
<div class="a m" style="left:583.7px;top:944.8px;line-height:22.4px;color:#000">00</div>
<div class="a m" style="left:615.8px;top:944.8px;line-height:22.4px;color:#000">00</div>
<div class="a m" style="left:647.9px;top:944.8px;line-height:22.4px;color:#000">00</div>
<div class="a m" style="left:680.0px;top:944.8px;line-height:22.4px;color:#000">00</div>
<div class="a m" style="left:712.1px;top:944.8px;line-height:22.4px;color:#000">50</div>
<div class="a m" style="left:744.2px;top:944.8px;line-height:22.4px;color:#000">02</div>
<div class="a" style="left:802.20px;top:951.80px;width:3.2px;height:3.2px;border-radius:50%;background:#9a9a9a"></div>
<div class="a" style="left:812.90px;top:951.80px;width:3.2px;height:3.2px;border-radius:50%;background:#9a9a9a"></div>
<div class="a m" style="left:819.9px;top:944.8px;line-height:22.4px;color:#000">&lt;</div>
<div class="a" style="left:834.30px;top:951.80px;width:3.2px;height:3.2px;border-radius:50%;background:#111"></div>
<div class="a" style="left:845.00px;top:951.80px;width:3.2px;height:3.2px;border-radius:50%;background:#111"></div>
<div class="a m" style="left:852.0px;top:944.8px;line-height:22.4px;color:#000">P</div>
<div class="a" style="left:866.40px;top:951.80px;width:3.2px;height:3.2px;border-radius:50%;background:#dfefff"></div>
<div class="a" style="left:877.10px;top:951.80px;width:3.2px;height:3.2px;border-radius:50%;background:#dfefff"></div>
<div class="a" style="left:898.50px;top:951.80px;width:3.2px;height:3.2px;border-radius:50%;background:#dfefff"></div>
<div class="a" style="left:909.20px;top:951.80px;width:3.2px;height:3.2px;border-radius:50%;background:#dfefff"></div>
<div class="a" style="left:919.90px;top:951.80px;width:3.2px;height:3.2px;border-radius:50%;background:#111"></div>
<div class="a" style="left:930.60px;top:951.80px;width:3.2px;height:3.2px;border-radius:50%;background:#111"></div>
<div class="a" style="left:941.30px;top:951.80px;width:3.2px;height:3.2px;border-radius:50%;background:#111"></div>
<div class="a" style="left:952.00px;top:951.80px;width:3.2px;height:3.2px;border-radius:50%;background:#111"></div>
<div class="a m" style="left:959.0px;top:944.8px;line-height:22.4px;color:#000">P</div>
<div class="a" style="left:973.40px;top:951.80px;width:3.2px;height:3.2px;border-radius:50%;background:#111"></div>
<div class="a m" style="left:252.0px;top:967.2px;line-height:22.4px;color:#000">27</div>
<div class="a m" style="left:284.1px;top:967.2px;line-height:22.4px;color:#000">10</div>
<div class="a m" style="left:316.2px;top:967.2px;line-height:22.4px;color:#000">ec</div>
<div class="a m" style="left:348.3px;top:967.2px;line-height:22.4px;color:#000">42</div>
<div class="a m" style="left:380.4px;top:967.2px;line-height:22.4px;color:#000">00</div>
<div class="a m" style="left:412.5px;top:967.2px;line-height:22.4px;color:#000">00</div>
<div class="a m" style="left:444.6px;top:967.2px;line-height:22.4px;color:#000">47</div>
<div class="a m" style="left:476.7px;top:967.2px;line-height:22.4px;color:#000">45</div>
<div class="a m" style="left:519.5px;top:967.2px;line-height:22.4px;color:#000">54</div>
<div class="a m" style="left:551.6px;top:967.2px;line-height:22.4px;color:#000">20</div>
<div class="a m" style="left:583.7px;top:967.2px;line-height:22.4px;color:#000">2f</div>
<div class="a m" style="left:615.8px;top:967.2px;line-height:22.4px;color:#000">20</div>
<div class="a m" style="left:647.9px;top:967.2px;line-height:22.4px;color:#000">48</div>
<div class="a m" style="left:680.0px;top:967.2px;line-height:22.4px;color:#000">54</div>
<div class="a m" style="left:712.1px;top:967.2px;line-height:22.4px;color:#000">54</div>
<div class="a m" style="left:744.2px;top:967.2px;line-height:22.4px;color:#000">50</div>
<div class="a m" style="left:798.5px;top:967.2px;line-height:22.4px;color:#000">&#x27;</div>
<div class="a" style="left:812.90px;top:974.20px;width:3.2px;height:3.2px;border-radius:50%;background:#111"></div>
<div class="a" style="left:823.60px;top:974.20px;width:3.2px;height:3.2px;border-radius:50%;background:#111"></div>
<div class="a m" style="left:830.6px;top:967.2px;line-height:22.4px;color:#000">B</div>
<div class="a" style="left:845.00px;top:974.20px;width:3.2px;height:3.2px;border-radius:50%;background:#111"></div>
<div class="a" style="left:855.70px;top:974.20px;width:3.2px;height:3.2px;border-radius:50%;background:#111"></div>
<div class="a m" style="left:862.7px;top:967.2px;line-height:22.4px;color:#000">G</div>
<div class="a m" style="left:873.4px;top:967.2px;line-height:22.4px;color:#000">E</div>
<div class="a m" style="left:894.8px;top:967.2px;line-height:22.4px;color:#000">T</div>
<div class="a m" style="left:916.2px;top:967.2px;line-height:22.4px;color:#000">/</div>
<div class="a m" style="left:937.6px;top:967.2px;line-height:22.4px;color:#000">H</div>
<div class="a m" style="left:948.3px;top:967.2px;line-height:22.4px;color:#000">T</div>
<div class="a m" style="left:959.0px;top:967.2px;line-height:22.4px;color:#000">T</div>
<div class="a m" style="left:969.7px;top:967.2px;line-height:22.4px;color:#000">P</div>
<div class="a m" style="left:252.0px;top:989.6px;line-height:22.4px;color:#000">2f</div>
<div class="a m" style="left:284.1px;top:989.6px;line-height:22.4px;color:#000">31</div>
<div class="a m" style="left:316.2px;top:989.6px;line-height:22.4px;color:#000">2e</div>
<div class="a m" style="left:348.3px;top:989.6px;line-height:22.4px;color:#000">30</div>
<div class="a m" style="left:380.4px;top:989.6px;line-height:22.4px;color:#000">0d</div>
<div class="a m" style="left:412.5px;top:989.6px;line-height:22.4px;color:#000">0a</div>
<div class="a m" style="left:444.6px;top:989.6px;line-height:22.4px;color:#000">0d</div>
<div class="a m" style="left:476.7px;top:989.6px;line-height:22.4px;color:#000">0a</div>
<div class="a m" style="left:798.5px;top:989.6px;line-height:22.4px;color:#000">/</div>
<div class="a m" style="left:809.2px;top:989.6px;line-height:22.4px;color:#000">1</div>
<div class="a m" style="left:819.9px;top:989.6px;line-height:22.4px;color:#000">.</div>
<div class="a m" style="left:830.6px;top:989.6px;line-height:22.4px;color:#000">0</div>
<div class="a" style="left:845.00px;top:996.60px;width:3.2px;height:3.2px;border-radius:50%;background:#9a9a9a"></div>
<div class="a" style="left:855.70px;top:996.60px;width:3.2px;height:3.2px;border-radius:50%;background:#9a9a9a"></div>
<div class="a" style="left:866.40px;top:996.60px;width:3.2px;height:3.2px;border-radius:50%;background:#9a9a9a"></div>
<div class="a" style="left:877.10px;top:996.60px;width:3.2px;height:3.2px;border-radius:50%;background:#9a9a9a"></div>
</div></div>
<div class="a" style="left:519px;top:403.5px;width:207px;height:65.5px;background:transparent;border:6px solid #f34f4f;border-radius:3px"></div>
<div class="a" style="left:439.5px;top:937.5px;width:143px;height:33.5px;background:transparent;border:6px solid #f34f4f;border-radius:3px"></div>
</body></html>
